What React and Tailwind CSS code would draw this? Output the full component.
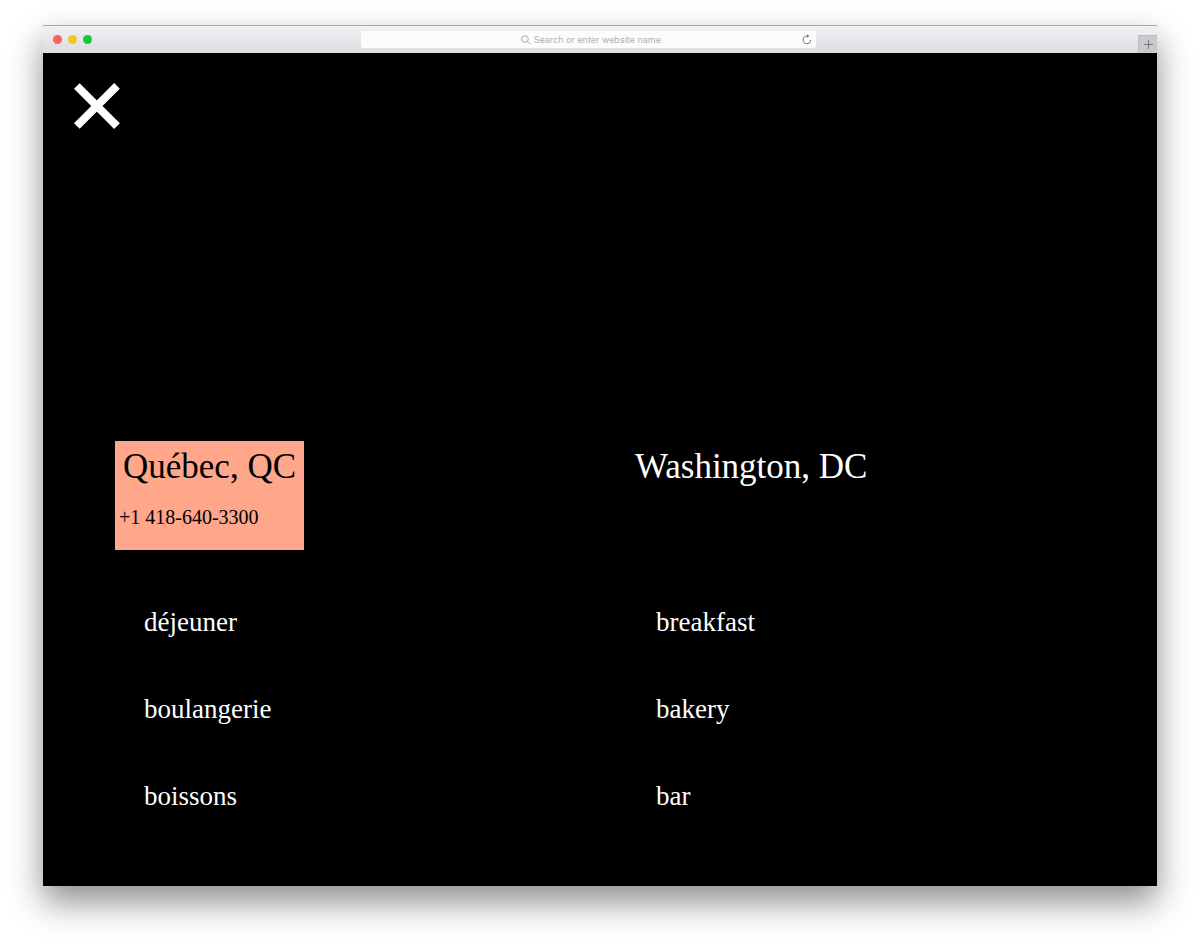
import React from 'react'

const locations = [
  {
    city: 'Québec, QC',
    phone: '+1 418-640-3300',
    active: true,
    links: ['déjeuner', 'boulangerie', 'boissons'],
  },
  {
    city: 'Washington, DC',
    active: false,
    links: ['breakfast', 'bakery', 'bar'],
  },
]

function BrowserBar() {
  return (
    <header className="grid h-7 grid-cols-[28fr_40fr_30fr] items-center border-t border-[#a8a8a8] bg-linear-to-b from-[#f2f2f4] to-[#dcdce1]">
      <div className="flex items-center gap-[6px] pl-[10px]">
        <span className="size-[9px] rounded-full bg-[#f4645c]" />
        <span className="size-[9px] rounded-full bg-[#f5c62c]" />
        <span className="size-[9px] rounded-full bg-[#12c83c]" />
      </div>

      <div className="flex h-[17px] items-center rounded-xs bg-[#fcfcfc] px-1">
        <label className="flex flex-1 items-center justify-center gap-[3px] pl-5">
          <svg viewBox="0 0 10 10" className="size-[10px] shrink-0 fill-none stroke-[#a8a8a8]">
            <circle cx="4" cy="4" r="3.3" />
            <path d="M6.4 6.4 9.5 9.5" />
          </svg>
          <input
            type="text"
            aria-label="Address"
            placeholder="Search or enter website name"
            className="w-[133px] bg-transparent font-['Inter',sans-serif] text-[9px] leading-4 outline-none placeholder:text-[#b0b0b0]"
          />
        </label>
        <button type="button" aria-label="Reload" className="shrink-0">
          <svg viewBox="0 0 10 11" className="h-[11px] w-[10px] fill-none stroke-[#777]">
            <path d="M5.2 2.1A3.8 3.8 0 1 0 8.8 5.9" />
            <path d="M5 .2 7.4 2.1 5 4Z" className="fill-[#777] stroke-none" />
          </svg>
        </button>
      </div>

      <div className="flex justify-end self-end">
        <button
          type="button"
          aria-label="New tab"
          className="flex h-[18px] w-[19px] items-center justify-center border-t border-l border-[#bdbdc1] bg-[#c9c9cd]"
        >
          <svg viewBox="0 0 9 9" className="size-[9px] stroke-[#77777b]">
            <path d="M4.5 0V9M0 4.5H9" />
          </svg>
        </button>
      </div>
    </header>
  )
}

function Location({ city, phone, active, links }) {
  return (
    <section>
      <div className={active ? 'h-[109px] w-[189px] bg-[#ffa68b] text-black' : 'h-[109px] text-white'}>
        <h2 className="px-2 pt-[5px] text-[35px] leading-[42px] whitespace-nowrap">{city}</h2>
        {phone && (
          <a href="tel:+14186403300" className="mt-[15px] block px-1 text-xl leading-7">
            {phone}
          </a>
        )}
      </div>

      <ul className="mt-[52px] flex flex-col gap-[47px] pl-[29px] text-[27px] leading-10 text-white">
        {links.map((link) => (
          <li key={link}>
            <a href={`#${link}`}>{link}</a>
          </li>
        ))}
      </ul>
    </section>
  )
}

export default function App() {
  return (
    <div className="bg-white px-[43px] pt-[25px] pb-[60px]">
      <div className="shadow-[0_16px_32px_rgba(0,0,0,0.45)]">
        <BrowserBar />
        <main className="bg-black pt-[30px] pb-[70px] font-['Liberation_Serif',serif]">
          <button type="button" aria-label="Close menu" className="ml-[31px] block">
            <svg viewBox="0 0 46 46" className="size-[46px] fill-none stroke-white stroke-[8px]">
              <path d="M2.8 3 43 43.2M43 2.8 2.8 43" />
            </svg>
          </button>
          <nav aria-label="Locations" className="mt-[312px] grid grid-cols-2 pr-[18px] pl-[72px]">
            {locations.map((location) => (
              <Location key={location.city} {...location} />
            ))}
          </nav>
        </main>
      </div>
    </div>
  )
}
